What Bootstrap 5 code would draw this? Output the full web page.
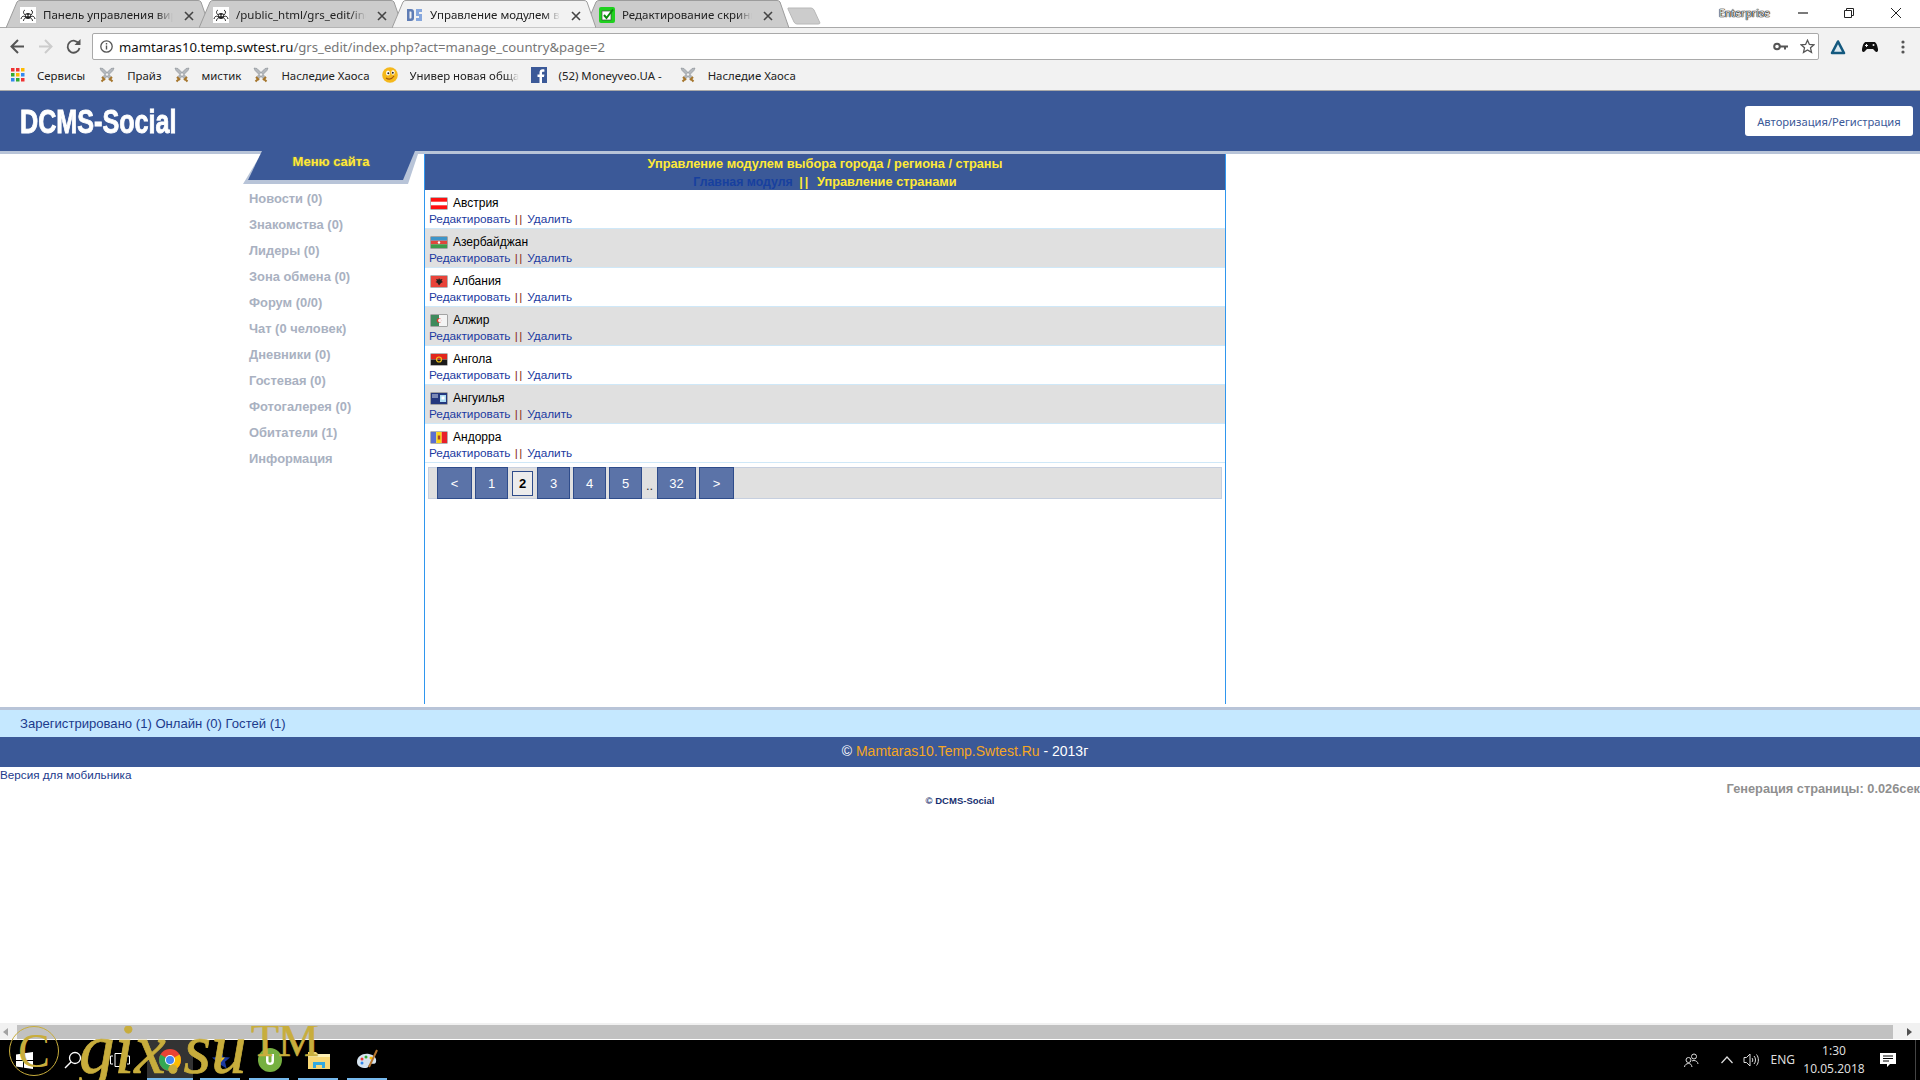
<!DOCTYPE html>
<html lang="ru">
<head>
<meta charset="utf-8">
<title>Управление модулем выбора города</title>
<link href="https://cdn.jsdelivr.net/npm/bootstrap@5.3.0/dist/css/bootstrap.min.css" rel="stylesheet">
<style>
html,body{margin:0;height:100%;overflow:hidden}
body{width:1920px;height:1080px;background:#fff;font-family:"Liberation Sans",Arial,sans-serif;position:relative;color:#000}
svg{display:block;flex:none}
.ui{font-family:"Noto Sans","Open Sans",sans-serif}
/* tabs */
.tabstrip{height:28px;background:#fff;border-bottom:1px solid #a9a9a9;padding-left:6px;font-size:11.5px;color:#222}
.tabitem{width:204px;height:28px;margin-right:-11px;position:relative;padding:4px 0 0 14px;gap:7px}
.tabitem.is-on{z-index:2}
.tabitem .shape{position:absolute;inset:0;width:100%;height:100%;z-index:0}
.tabitem>*:not(.shape){position:relative;z-index:1}
.tabicon{margin-top:3px}
.tabname{width:130px;white-space:nowrap;overflow:hidden;line-height:22px;-webkit-mask-image:linear-gradient(90deg,#000 88%,transparent);mask-image:linear-gradient(90deg,#000 88%,transparent)}
.tabx{margin:7px 0 0 4px}
.newtab{margin:7px 0 0 9px}
.entlabel{font-size:10.5px;color:#ddd;text-shadow:0 0 1px #000,0 0 1px #000,0 0 1px #000;width:79px;line-height:18px}
.wicon{width:46px}
.wicon:last-child{width:30px}
/* toolbar */
.toolbar{height:32px;background:#f2f2f2;padding-left:10px;padding-top:5px}
.urlbox{width:1727px;height:27px;background:#fff;border:1px solid #a9a9a9;border-radius:2px;margin-left:11px;padding:0 3px 0 7px;font-size:13.15px;color:#777}
.urlbox b{font-weight:400;color:#111}
.navicons{gap:13px}
.urltext{margin-left:6px;white-space:nowrap;padding-top:2px}
.exticons{margin-left:11px}
.extgame{margin-left:16px}
.extdots{margin-left:23px}
/* bookmarks */
.bookbar{height:31px;background:#f2f2f2;border-bottom:1px solid #a9a9a9;padding:1px 0 0 11px;font-size:11.4px;color:#222;gap:12px}
.bmk{gap:12px;white-space:nowrap}
.bmk:first-child{margin-right:2px}
.bmk-fade{width:109px;overflow:hidden;-webkit-mask-image:linear-gradient(90deg,#000 88%,transparent);mask-image:linear-gradient(90deg,#000 88%,transparent)}
.bmk-pad{padding-right:6px}
/* site */
.sitehead{height:60px;background:#3b5998;padding:0 7px 0 20px}
.sitelogo{font-family:"Liberation Sans",sans-serif;font-weight:700;font-size:34px;color:#fff;display:inline-block;transform:scaleX(.74);transform-origin:left center;line-height:58px;-webkit-text-stroke:.9px #fff}
.authbtn{height:30px;width:168px;background:#fff;border-radius:3px;font-family:"Noto Sans",sans-serif;font-size:11.2px;color:#3b5998;text-decoration:none;line-height:31px;text-align:center}
.stripe{height:3px;background:#b8c4d8;flex:none}
.stripe-gap{margin-top:3px}
.sitebody{height:550px;padding-left:243px}
.sidecol{width:181px}
.menutab{position:relative;height:33px;margin-top:-3px;width:176px;text-align:center;color:#ffe936;font-weight:700;font-size:13px;line-height:22px}
.menutab svg{position:absolute;inset:0}
.menutab span{position:relative;text-shadow:0 0 2px #8a8f60}
.menulist{padding:2px 0 0 6px;margin:0;list-style:none}
.menulist a{display:block;height:26px;line-height:26px;font-weight:700;font-size:12.9px;color:#a9b1c1;text-decoration:none;white-space:nowrap}
.maincol{width:802px;border-left:1px solid #2f96ee;border-right:1px solid #2f96ee;font-size:11.8px}
.mainhead{height:36px;background:#3b5998;color:#ffe936;font-weight:700;font-size:12.8px;line-height:18px;text-align:center;padding-top:1px}
.mainhead a{color:#17409f;text-decoration:none;font-size:12.3px}
.seppipe{letter-spacing:2px;margin:0 3px}
.crow{height:39px;padding:5px 0 0 4px;border-bottom:1px solid #cfe8f8;background:#fff;line-height:16px}
.crow.alt{background:#e0e0e0}
.cname{gap:6px;padding-left:2px;font-size:12px;height:16px}
.flagbox{width:16px;height:11px;box-shadow:0 0 0 .5px #666}
.clinks{color:#8b2f20;height:16px}
.clinks a{color:#1c3aa0;text-decoration:none}
.pipes{letter-spacing:1.5px;margin-left:1px}
.pager{height:32px;margin:4px 3px 0 3px;background:#e0e0e0;border:1px solid #c6cfdf;padding-left:8px;gap:3px;font-size:13px}
.pgbtn{height:32px;margin-top:-1px;background:#5b73a8;border:1px solid #2e4c8b;color:#fff;text-decoration:none;text-align:center;line-height:32px;width:33px}
.pgbtn.w-arrow{width:35px}
.pgbtn.w-big{width:39px}
.pgcur{height:25px;width:21px;border:1px solid #2e4c8b;font-weight:700;text-align:center;line-height:23px;margin:3px 1px 0;background:#ececec}
.pgdots{width:9px;margin:0;color:#333;text-align:center;line-height:36px;height:30px}
.onlinebar{height:27px;background:#c5e8ff;padding-left:20px;font-size:13.1px;line-height:27px;color:#1c3a8c}
.copybar{height:30px;background:#3b5998;color:#fff;font-size:14px;line-height:28px;text-align:center;padding-left:10px}
.copybar a{color:#f5a623;text-decoration:none}
.mobilelink{font-size:11.7px;line-height:16px;color:#1c3a8c;text-decoration:none;display:block}
.footrow{height:256px}
.gen{font-weight:700;font-size:12.8px;color:#8f8f8f;text-align:right;line-height:16px;margin-top:-2px}
.copysmall{font-weight:700;font-size:9.5px;text-align:center;color:#17306f;line-height:12px;margin-top:-2px}
/* scrollbar and taskbar */
.hscroll{height:17px;background:#f1f1f1;padding:2px 0 1px 0;border-bottom:1px solid #fff}
.hthumb{width:1876px;height:14px;margin:0 10px 0 5px;background:#c1c1c1}
.taskbar{height:40px;background:#000;position:relative;color:#ddd;font-family:"Noto Sans",sans-serif;font-size:12px}
.tbleft{width:147px;padding-left:16px}
.tbsearch{margin-left:31px}
.tbview{margin-left:28px}
.tbslot{width:49px;height:40px;position:relative}
.tbslot.hot{background:#333;width:46px;margin-right:3px}
.tbslot.on::after{content:"";position:absolute;left:4px;right:5px;bottom:0;height:2px;background:#76b9ed}
.tbslot.hot.on::after{left:0;right:0}
.tray{margin-left:auto}
.tchev{margin-left:22px}
.tspk{margin-left:10px}
.teng{margin-left:11px}
.clock{text-align:center;line-height:18px;width:70px;font-size:12px;margin-left:4px}
.tnote{margin:0 19px 0 11px}
.tdiv{height:40px;width:1px;background:#444;margin-right:4px}
.gixmark{position:absolute;left:9px;top:1026px;height:54px;width:320px;overflow:hidden;color:#c8ad3c;font-family:"Liberation Serif",serif;pointer-events:none}
.gixword{position:absolute;left:70px;top:-21px;font-size:71px;line-height:88px;font-style:italic;white-space:nowrap;-webkit-text-stroke:.7px #c8ad3c}
.gixtm{position:absolute;left:242px;top:-8px;font-size:46px;line-height:46px;white-space:nowrap;letter-spacing:-1px;-webkit-text-stroke:.6px #c8ad3c}
.gixc{position:absolute;left:0;top:0;width:50px;height:50px;border:1.5px solid #c8ad3c;border-radius:50%;text-align:center;font-size:48px;line-height:47px}
</style>
</head>
<body class="d-flex flex-column">
<svg width="0" height="0" class="position-absolute">
<defs>
<symbol id="spider" viewBox="0 0 16 16"><rect width="16" height="16" fill="#fff"/><ellipse cx="8" cy="9" rx="3.2" ry="3" fill="#222"/><circle cx="6.6" cy="8.4" r=".9" fill="#fff"/><circle cx="9.4" cy="8.4" r=".9" fill="#fff"/><path d="M5 8C3 6 3 4 5 3M11 8c2-2 2-4 0-5M4.8 9.5C2.5 8.5 1.5 10 1 12M11.2 9.5c2.3-1 3.3.5 3.8 2.5M5.5 11c-1.5.5-2 2-2 3M10.5 11c1.5.5 2 2 2 3" fill="none" stroke="#222" stroke-width="1"/></symbol>
<symbol id="swords" viewBox="0 0 16 16"><path d="M1 1l3 .5 8 8-2 2-8-8zM15 1l-3 .5-8 8 2 2 8-8z" fill="#b4b8bd" stroke="#7d8288" stroke-width=".5"/><path d="M3 10l3 3M13 10l-3 3M2.5 14.5l2-2M13.5 14.5l-2-2" stroke="#a5752c" stroke-width="2"/></symbol>
<symbol id="closex" viewBox="0 0 10 10"><path d="M1 1l8 8M9 1L1 9" stroke="#444" stroke-width="1.6"/></symbol>
</defs>
</svg>

<!-- tab strip -->
<div class="tabstrip d-flex ui">
  <div class="tabitem d-flex">
    <svg class="shape" viewBox="0 0 204 28" preserveAspectRatio="none"><path d="M0 28L11 2Q12 .5 14 .5H192Q194 .5 195 2L204 28Z" fill="#cccccc" stroke="#9c9c9c"/></svg>
    <svg class="tabicon" width="16" height="16"><use href="#spider"/></svg>
    <span class="tabname">Панель управления вирт</span><svg class="tabx" width="10" height="10"><use href="#closex"/></svg>
  </div>
  <div class="tabitem d-flex">
    <svg class="shape" viewBox="0 0 204 28" preserveAspectRatio="none"><path d="M0 28L11 2Q12 .5 14 .5H192Q194 .5 195 2L204 28Z" fill="#cccccc" stroke="#9c9c9c"/></svg>
    <svg class="tabicon" width="16" height="16"><use href="#spider"/></svg>
    <span class="tabname">/public_html/grs_edit/ind</span><svg class="tabx" width="10" height="10"><use href="#closex"/></svg>
  </div>
  <div class="tabitem d-flex is-on">
    <svg class="shape" viewBox="0 0 204 29" preserveAspectRatio="none"><path d="M0 29L11 2Q12 .5 14 .5H192Q194 .5 195 2L204 29Z" fill="#f2f2f2" stroke="#9c9c9c"/></svg>
    <svg class="tabicon" width="17" height="16" viewBox="0 0 17 16"><path d="M1 2h4c2 0 3 1 3 3v6c0 2-1 3-3 3H1zM3.5 4.5v7h1c.8 0 1-.5 1-1V5.5c0-.5-.2-1-1-1z" fill="#5f7db5" fill-rule="evenodd"/><path d="M10 2h6v3h-3v2h3v7h-6v-3h3V9h-3z" fill="#86a7dd"/></svg>
    <span class="tabname">Управление модулем вы</span><svg class="tabx" width="10" height="10"><use href="#closex"/></svg>
  </div>
  <div class="tabitem d-flex">
    <svg class="shape" viewBox="0 0 204 28" preserveAspectRatio="none"><path d="M0 28L11 2Q12 .5 14 .5H192Q194 .5 195 2L204 28Z" fill="#cccccc" stroke="#9c9c9c"/></svg>
    <svg class="tabicon" width="16" height="16" viewBox="0 0 16 16"><rect width="16" height="16" rx="2" fill="#1fd11f"/><rect x="3" y="4" width="9" height="9" fill="#fff" stroke="#444" stroke-width=".7"/><path d="M5 8l2.5 3L14 2.5" fill="none" stroke="#0a8a0a" stroke-width="2"/></svg>
    <span class="tabname">Редактирование скринш</span><svg class="tabx" width="10" height="10"><use href="#closex"/></svg>
  </div>
  <svg class="newtab" width="34" height="18" viewBox="0 0 34 18"><path d="M1 1H24Q26 1 27 3L33 16Q33 17 31 17H10Q8 17 7 15L1 2Z" fill="#cccccc" stroke="#b8b8b8"/></svg>
  <div class="d-flex ms-auto align-items-start pt-1">
    <span class="entlabel">Enterprise</span>
    <span class="wicon"><svg width="10" height="18" viewBox="0 0 10 18"><path d="M0 9h10" stroke="#222" stroke-width="1.2"/></svg></span>
    <span class="wicon"><svg width="10" height="18" viewBox="0 0 10 18"><path d="M.5 6.5h7v7h-7zM2.5 6.5v-2h7v7h-2" fill="none" stroke="#222"/></svg></span>
    <span class="wicon"><svg width="12" height="18" viewBox="0 0 12 18"><path d="M1 4l10 10M11 4L1 14" stroke="#222"/></svg></span>
  </div>
</div>

<!-- toolbar -->
<div class="toolbar d-flex ui">
  <div class="navicons d-flex align-items-center">
    <svg width="15" height="27" viewBox="0 0 15 27"><path d="M14 13.5H2M8 7l-6.5 6.5L8 20" fill="none" stroke="#555" stroke-width="2"/></svg>
    <svg width="15" height="27" viewBox="0 0 15 27"><path d="M1 13.5h12M7 7l6.5 6.5L7 20" fill="none" stroke="#ccc" stroke-width="2"/></svg>
    <svg width="15" height="27" viewBox="0 0 15 27"><path d="M13 11a6 6 0 1 0 .5 4" fill="none" stroke="#555" stroke-width="1.8"/><path d="M14.5 6v6h-6z" fill="#555"/></svg>
  </div>
  <div class="urlbox d-flex align-items-center">
    <svg width="13" height="13" viewBox="0 0 13 13"><circle cx="6.5" cy="6.5" r="5.7" fill="none" stroke="#555" stroke-width="1.3"/><path d="M6.5 5.5v4M6.5 3v1.5" stroke="#555" stroke-width="1.4"/></svg>
    <span class="urltext"><b>mamtaras10.temp.swtest.ru</b>/grs_edit/index.php?act=manage_country&amp;page=2</span>
    <svg class="ms-auto me-2" width="15" height="9" viewBox="0 0 15 9"><circle cx="4" cy="4.5" r="2.8" fill="none" stroke="#555" stroke-width="2"/><path d="M7 4.5h8M12 4.5v3" stroke="#555" stroke-width="2"/></svg>
    <svg class="ms-1" width="15" height="15" viewBox="0 0 15 15"><path d="M7.5 1.2l1.9 4.2 4.5.4-3.4 3 1 4.5-4-2.4-4 2.4 1-4.5-3.4-3 4.5-.4z" fill="none" stroke="#555" stroke-width="1.3"/></svg>
  </div>
  <div class="exticons d-flex align-items-center">
    <svg width="16" height="16" viewBox="0 0 16 16"><path d="M8 2.5L14 14H2z" fill="#dbe9f0" stroke="#14597f" stroke-width="2.6" stroke-linejoin="round"/></svg>
    <svg class="extgame" width="16" height="12" viewBox="0 0 16 12"><path d="M4 1h8c2 0 3 2 4 7 .5 3-2 4-3.5 1.5L11 8H5L3.5 9.5C2 12-.5 11 0 8c1-5 2-7 4-7z" fill="#111"/><circle cx="11.5" cy="4" r="1" fill="#f2f2f2"/><path d="M3 4.5h3M4.5 3v3" stroke="#f2f2f2"/></svg>
    <svg class="extdots" width="4" height="14" viewBox="0 0 4 14"><circle cx="2" cy="2" r="1.6" fill="#555"/><circle cx="2" cy="7" r="1.6" fill="#555"/><circle cx="2" cy="12" r="1.6" fill="#555"/></svg>
  </div>
</div>

<!-- bookmarks -->
<div class="bookbar d-flex align-items-center ui">
  <div class="bmk d-flex align-items-center">
    <svg width="14" height="14" viewBox="0 0 14 14"><rect width="3.5" height="3.5" fill="#e33"/><rect x="5" width="3.5" height="3.5" fill="#e33"/><rect x="10" width="3.5" height="3.5" fill="#fb0"/><rect y="5" width="3.5" height="3.5" fill="#3a3"/><rect x="5" y="5" width="3.5" height="3.5" fill="#fb0"/><rect x="10" y="5" width="3.5" height="3.5" fill="#38e"/><rect y="10" width="3.5" height="3.5" fill="#38e"/><rect x="5" y="10" width="3.5" height="3.5" fill="#3a3"/><rect x="10" y="10" width="3.5" height="3.5" fill="#e33"/></svg>
    <span>Сервисы</span></div>
  <div class="bmk d-flex align-items-center"><svg width="16" height="16"><use href="#swords"/></svg><span>Прайз</span></div>
  <div class="bmk d-flex align-items-center"><svg width="16" height="16"><use href="#swords"/></svg><span>мистик</span></div>
  <div class="bmk d-flex align-items-center"><svg width="16" height="16"><use href="#swords"/></svg><span>Наследие Хаоса</span></div>
  <div class="bmk d-flex align-items-center">
    <svg width="16" height="16" viewBox="0 0 16 16"><circle cx="8" cy="8" r="7.8" fill="#f5b81c"/><ellipse cx="6" cy="6" rx="2" ry="2.5" fill="#fff"/><ellipse cx="11" cy="5.5" rx="1.7" ry="2.2" fill="#fff"/><circle cx="6.3" cy="6.3" r="1" fill="#222"/><circle cx="10.8" cy="5.8" r="1" fill="#222"/><path d="M4 11c3 2 6 1 8-2" fill="none" stroke="#a3560d" stroke-width="1.2"/></svg>
    <span class="bmk-fade">Универ новая обща</span></div>
  <div class="bmk d-flex align-items-center">
    <svg width="16" height="16" viewBox="0 0 16 16"><rect width="16" height="16" fill="#3b5998"/><path d="M11 16V10h2l.4-2.5H11V6c0-.8.3-1.2 1.2-1.2h1.2V2.500C13 2.400 12.300 2.300 11.600 2.300 9.700 2.300 8.500 3.500 8.500 5.600v1.900H6.500V10h2v6z" fill="#fff"/></svg>
    <span class="bmk-pad">(52) Moneyveo.UA -</span></div>
  <div class="bmk d-flex align-items-center"><svg width="16" height="16"><use href="#swords"/></svg><span>Наследие Хаоса</span></div>
</div>

<!-- site header -->
<header class="sitehead d-flex align-items-center justify-content-between">
  <span class="sitelogo">DCMS-Social</span>
  <a class="authbtn" href="#">Авторизация/Регистрация</a>
</header>
<div class="stripe"></div>

<div class="sitebody d-flex">
  <nav class="sidecol">
    <div class="menutab">
      <svg width="176" height="33" viewBox="0 0 176 33"><path d="M0 33L20 0H176L165 33Z" fill="#b8c4d8"/><path d="M5 29L19 0H172L160 29Z" fill="#3b5998"/></svg>
      <span>Меню сайта</span>
    </div>
    <ul class="menulist">
      <li><a href="#">Новости (0)</a></li>
      <li><a href="#">Знакомства (0)</a></li>
      <li><a href="#">Лидеры (0)</a></li>
      <li><a href="#">Зона обмена (0)</a></li>
      <li><a href="#">Форум (0/0)</a></li>
      <li><a href="#">Чат (0 человек)</a></li>
      <li><a href="#">Дневники (0)</a></li>
      <li><a href="#">Гостевая (0)</a></li>
      <li><a href="#">Фотогалерея (0)</a></li>
      <li><a href="#">Обитатели (1)</a></li>
      <li><a href="#">Информация</a></li>
    </ul>
  </nav>
  <main class="maincol">
    <div class="mainhead">
      <div>Управление модулем выбора города / региона / страны</div>
      <div><a href="#">Главная модуля</a> <span class="seppipe">||</span> Управление странами</div>
    </div>

    <div class="crow">
      <div class="cname d-flex align-items-center"><svg class="flagbox" viewBox="0 0 16 11"><rect width="16" height="11" fill="#f11"/><rect y="3.7" width="16" height="3.6" fill="#fff"/></svg><span>Австрия</span></div>
      <div class="clinks"><a href="#">Редактировать</a> <span class="pipes">||</span> <a href="#">Удалить</a></div>
    </div>
    <div class="crow alt">
      <div class="cname d-flex align-items-center"><svg class="flagbox" viewBox="0 0 16 11"><rect width="16" height="3.7" fill="#3e95c9"/><rect y="3.7" width="16" height="3.6" fill="#e0463c"/><rect y="7.3" width="16" height="3.7" fill="#3d9c4c"/><circle cx="8" cy="5.5" r="1.2" fill="#fff"/></svg><span>Азербайджан</span></div>
      <div class="clinks"><a href="#">Редактировать</a> <span class="pipes">||</span> <a href="#">Удалить</a></div>
    </div>
    <div class="crow">
      <div class="cname d-flex align-items-center"><svg class="flagbox" viewBox="0 0 16 11"><rect width="16" height="11" fill="#e8443a"/><path d="M8 2l1 1.5 2.5-.5-1 2 1.5 1-2 1L8 9.5 6.5 7l-2-1 1.5-1-1-2 2.5.5z" fill="#222"/></svg><span>Албания</span></div>
      <div class="clinks"><a href="#">Редактировать</a> <span class="pipes">||</span> <a href="#">Удалить</a></div>
    </div>
    <div class="crow alt">
      <div class="cname d-flex align-items-center"><svg class="flagbox" viewBox="0 0 16 11"><rect width="8" height="11" fill="#3f8a5c"/><rect x="8" width="8" height="11" fill="#f4f4f4"/><circle cx="8" cy="5.5" r="2.3" fill="#e2342b"/><circle cx="8.8" cy="5.5" r="1.7" fill="#f4f4f4"/></svg><span>Алжир</span></div>
      <div class="clinks"><a href="#">Редактировать</a> <span class="pipes">||</span> <a href="#">Удалить</a></div>
    </div>
    <div class="crow">
      <div class="cname d-flex align-items-center"><svg class="flagbox" viewBox="0 0 16 11"><rect width="16" height="5.5" fill="#e1261c"/><rect y="5.5" width="16" height="5.5" fill="#1a1a1a"/><circle cx="8" cy="5.5" r="2.5" fill="none" stroke="#f5c518" stroke-width="1.2"/></svg><span>Ангола</span></div>
      <div class="clinks"><a href="#">Редактировать</a> <span class="pipes">||</span> <a href="#">Удалить</a></div>
    </div>
    <div class="crow alt">
      <div class="cname d-flex align-items-center"><svg class="flagbox" viewBox="0 0 16 11"><rect width="16" height="11" fill="#24387e"/><rect x="1" y="1" width="6" height="4" fill="#7b89b5"/><rect x="9" y="2" width="6" height="7" fill="#aedcf2"/><rect x="10.5" y="3.5" width="3" height="3" fill="#fff"/></svg><span>Ангуилья</span></div>
      <div class="clinks"><a href="#">Редактировать</a> <span class="pipes">||</span> <a href="#">Удалить</a></div>
    </div>
    <div class="crow">
      <div class="cname d-flex align-items-center"><svg class="flagbox" viewBox="0 0 16 11"><rect width="5.3" height="11" fill="#5b6fd0"/><rect x="5.3" width="5.4" height="11" fill="#f9d616"/><rect x="10.7" width="5.3" height="11" fill="#e8202a"/><rect x="6.8" y="3.5" width="2.4" height="4" fill="#a8442a"/></svg><span>Андорра</span></div>
      <div class="clinks"><a href="#">Редактировать</a> <span class="pipes">||</span> <a href="#">Удалить</a></div>
    </div>

    <div class="pager d-flex align-items-start">
      <a class="pgbtn w-arrow" href="#">&lt;</a>
      <a class="pgbtn" href="#">1</a>
      <span class="pgcur">2</span>
      <a class="pgbtn" href="#">3</a>
      <a class="pgbtn" href="#">4</a>
      <a class="pgbtn" href="#">5</a>
      <span class="pgdots">..</span>
      <a class="pgbtn w-big" href="#">32</a>
      <a class="pgbtn w-arrow" href="#">&gt;</a>
    </div>
  </main>
</div>

<div class="stripe stripe-gap"></div>
<div class="onlinebar">Зарегистрировано (1) Онлайн (0) Гостей (1)</div>
<div class="copybar">© <a href="#">Mamtaras10.Temp.Swtest.Ru</a> - 2013г</div>

<div class="footrow">
  <a class="mobilelink" href="#">Версия для мобильника</a>
  <div class="gen">Генерация страницы: 0.026сек</div>
  <div class="copysmall">© DCMS-Social</div>
</div>

<div class="hscroll d-flex align-items-center">
  <svg width="12" height="14" viewBox="0 0 12 14"><path d="M8 3v8L3 7z" fill="#a3a3a3"/></svg>
  <div class="hthumb"></div>
  <svg width="12" height="14" viewBox="0 0 12 14"><path d="M4 3v8l5-4z" fill="#505050"/></svg>
</div>

<div class="taskbar d-flex align-items-center">
  <div class="tbleft d-flex align-items-center">
    <svg width="17" height="17" viewBox="0 0 17 17"><path d="M0 2.5l7-1v6.5H0zM8 1.3L17 0v8H8zM0 9h7v6.5l-7-1zM8 9h9v8l-9-1.3z" fill="#fff"/></svg>
    <svg class="tbsearch" width="18" height="18" viewBox="0 0 18 18"><circle cx="11" cy="7" r="5.5" fill="none" stroke="#fff" stroke-width="1.3"/><path d="M7 11l-6 6" stroke="#fff" stroke-width="1.5"/></svg>
    <svg class="tbview" width="20" height="14" viewBox="0 0 20 14"><path d="M5 .5h10v13H5zM3 3H.5v8H3M17 3h2.5v8H17" fill="none" stroke="#fff"/></svg>
  </div>
  <div class="tbslot hot on d-flex align-items-center justify-content-center">
    <svg width="22" height="22" viewBox="0 0 22 22"><circle cx="11" cy="11" r="11" fill="#ea4335"/><path d="M11 11L20.5 5.5A11 11 0 0 1 11 22z" fill="#fbbc05"/><path d="M11 11L11 22A11 11 0 0 1 1.5 5.5z" fill="#34a853"/><circle cx="11" cy="11" r="5" fill="#fff"/><circle cx="11" cy="11" r="4" fill="#4285f4"/></svg>
  </div>
  <div class="tbslot on d-flex align-items-center justify-content-center">
    <svg width="18" height="18" viewBox="0 0 18 18"><path d="M9 0l2.4 6 6.6.5-5 4.3 1.6 6.7L9 14l-5.6 3.5L5 10.8 0 6.5 6.6 6z" fill="#1c3aa0"/><path d="M5 6.5h8L9 11z" fill="#f2c21a"/></svg>
  </div>
  <div class="tbslot on d-flex align-items-center justify-content-center">
    <svg width="24" height="24" viewBox="0 0 24 24"><circle cx="12" cy="12" r="12" fill="#76b041"/><path d="M8 6v7c0 3 2 4 4 4s4-1 4-4V6h-2.5v7c0 1-.6 1.6-1.5 1.6S10.5 14 10.5 13V6z" fill="#fff"/></svg>
  </div>
  <div class="tbslot on d-flex align-items-center justify-content-center">
    <svg width="22" height="18" viewBox="0 0 22 18"><path d="M0 1h8l2 2h12v15H0z" fill="#f8d775"/><rect y="3" width="22" height="3" fill="#fdf0b5"/><path d="M5 17v-6h12v6h-3v-3H8v3z" fill="#32a9e0"/></svg>
  </div>
  <div class="tbslot on d-flex align-items-center justify-content-center">
    <svg width="24" height="24" viewBox="0 0 24 24"><path d="M1 14C1 8 7 5 13 6c5 1 8 4 7 8-1 3-4 1-6 2-2 1-1 4-4 4-5 0-9-2-9-6z" fill="#d6e4ef"/><circle cx="6" cy="11" r="1.5" fill="#e33"/><circle cx="10" cy="9" r="1.5" fill="#3a3"/><circle cx="15" cy="10" r="1.5" fill="#fb0"/><circle cx="6" cy="15" r="1.5" fill="#38e"/><path d="M13 19L21 2" stroke="#b5742c" stroke-width="2"/></svg>
  </div>
  <div class="tray d-flex align-items-center">
    <svg width="15" height="15" viewBox="0 0 15 15"><circle cx="10" cy="3.5" r="2.5" fill="none" stroke="#ddd"/><circle cx="4.5" cy="7" r="2.5" fill="none" stroke="#ddd"/><path d="M.5 14c0-2 2-3.5 4-3.5s3 1 3.5 3.5M8 8c.8-.4 1.3-.5 2-.5 2 0 4 1.5 4 3.5" fill="none" stroke="#ddd"/></svg>
    <svg class="tchev" width="12" height="8" viewBox="0 0 12 8"><path d="M.5 7L6 1l5.5 6" fill="none" stroke="#ddd" stroke-width="1.2"/></svg>
    <svg class="tspk" width="16" height="14" viewBox="0 0 16 14"><path d="M1 4.5h2.5L7 1v12L3.5 9.5H1zM9 5c1 1 1 3 0 4M11 3c2 2 2 6 0 8M13.5 1.5c2.5 3 2.5 8 0 11" fill="none" stroke="#ddd"/></svg>
    <span class="teng">ENG</span>
    <div class="clock">1:30<br>10.05.2018</div>
    <svg class="tnote" width="16" height="16" viewBox="0 0 16 16"><path d="M0 1h16v11h-6l-3 3v-3H0z" fill="#fff"/><path d="M3 4h10M3 6.5h10M3 9h6" stroke="#000"/></svg>
    <div class="tdiv"></div>
  </div>
</div>

<div class="gixmark">
  <span class="gixc">C</span>
  <span class="gixword">gix.su</span>
  <span class="gixtm">TM</span>
</div>

<script src="https://cdn.jsdelivr.net/npm/bootstrap@5.3.0/dist/js/bootstrap.bundle.min.js"></script>
</body>
</html>
